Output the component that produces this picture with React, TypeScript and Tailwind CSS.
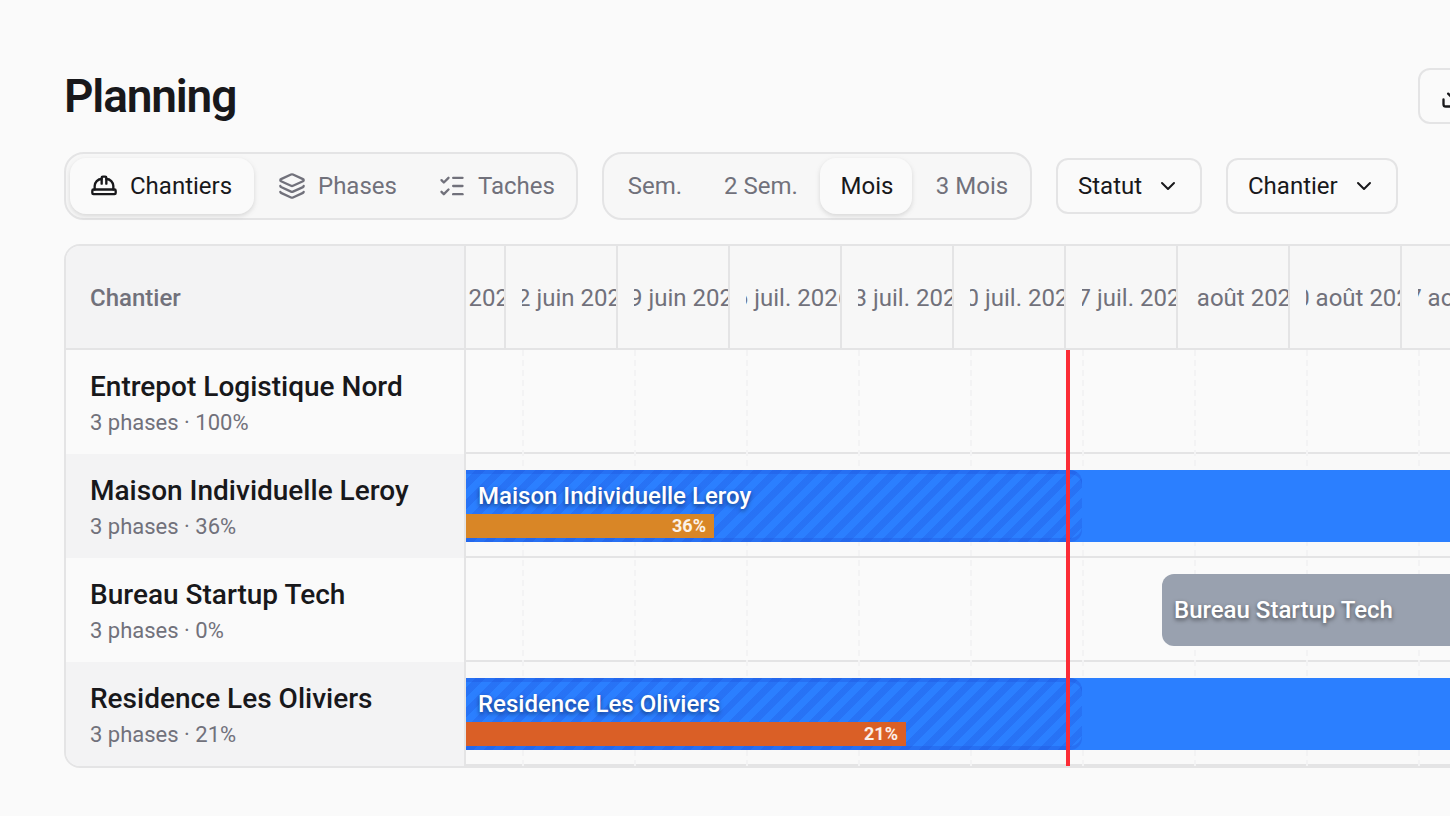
import { useState } from "react";
import { ChevronDown, Download, HardHat, Layers, ListChecks } from "lucide-react";

const VIEWS = [
  { label: "Chantiers", icon: HardHat, width: "w-[184px]" },
  { label: "Phases", icon: Layers, width: "w-[156px]" },
  { label: "Taches", icon: ListChecks, width: "w-[154px]" },
];

const RANGES = [
  { label: "Sem.", width: "w-[92px]" },
  { label: "2 Sem.", width: "w-[112px]" },
  { label: "Mois", width: "w-[92px]" },
  { label: "3 Mois", width: "w-[110px]" },
];

const FILTERS = [
  { label: "Statut", width: "w-[146px]" },
  { label: "Chantier", width: "w-[172px]" },
];

const WEEKS = [
  "15 juin 2026",
  "22 juin 2026",
  "29 juin 2026",
  "6 juil. 2026",
  "13 juil. 2026",
  "20 juil. 2026",
  "27 juil. 2026",
  "3 août 2026",
  "10 août 2026",
  "17 août 2026",
];

type Site = {
  name: string;
  progress: number;
  bar?: { start: number; color: string; elapsed?: number; done?: number; doneColor?: string };
};

const SITES: Site[] = [
  { name: "Entrepot Logistique Nord", progress: 100 },
  {
    name: "Maison Individuelle Leroy",
    progress: 36,
    bar: { start: 0, color: "bg-[#2b7fff]", elapsed: 616, done: 248, doneColor: "bg-[#d98626]" },
  },
  { name: "Bureau Startup Tech", progress: 0, bar: { start: 696, color: "bg-[#99a1af] rounded-l-xl" } },
  {
    name: "Residence Les Oliviers",
    progress: 21,
    bar: { start: 0, color: "bg-[#2b7fff]", elapsed: 616, done: 440, doneColor: "bg-[#da5f26]" },
  },
];

function tabClass(active: boolean) {
  return active
    ? "bg-[#fafafa] text-[#18181b] shadow-[0_2px_6px_rgba(0,0,0,0.08),0_2px_4px_rgba(0,0,0,0.06)]"
    : "text-[#71717b]";
}

function Timeline({ site, striped }: { site: Site; striped: boolean }) {
  const { bar } = site;
  return (
    <div className={`flex h-[104px] border-b-2 border-[#e4e4e5] py-4 ${striped ? "bg-[#f9f9f9]" : ""}`}>
      {bar && (
        <div
          className={`relative z-10 flex h-[72px] flex-1 flex-col overflow-hidden ${bar.color}`}
          style={{ marginLeft: bar.start }}
        >
          {bar.elapsed && (
            <div
              className="absolute inset-y-0 left-0 rounded-r-xl bg-[repeating-linear-gradient(135deg,transparent_0_7px,rgba(29,78,216,0.25)_7px_14px)] shadow-[inset_0_4px_0_rgba(29,78,216,0.3),inset_0_-4px_0_rgba(29,78,216,0.3)]"
              style={{ width: bar.elapsed }}
            />
          )}
          <span
            className={`relative px-3 text-2xl font-medium whitespace-nowrap text-white [text-shadow:0_2px_4px_rgba(0,0,0,0.5)] ${bar.done ? "pt-2.5 pb-0.5 leading-8" : "leading-[72px]"}`}
          >
            {site.name}
          </span>
          {bar.done && (
            <div
              className={`relative h-6 pr-2 text-right text-lg leading-6 font-bold text-white/90 ${bar.doneColor}`}
              style={{ width: bar.done }}
            >
              {site.progress}%
            </div>
          )}
        </div>
      )}
    </div>
  );
}

export default function App() {
  const [view, setView] = useState("Chantiers");
  const [range, setRange] = useState("Mois");

  return (
    <main className="min-h-screen overflow-hidden bg-[#fafafa] p-16 font-[Roboto,sans-serif] text-[#18181b]">
      <div className="flex min-w-[1426px] flex-col gap-6">
        <header className="flex h-16 items-center justify-between">
          <h1 className="text-[46px] leading-[64px] font-semibold tracking-tight">Planning</h1>
          <button
            type="button"
            aria-label="Exporter"
            className="flex h-14 w-[72px] items-center rounded-xl border-2 border-[#e4e4e5] px-5"
          >
            <Download className="size-7" />
          </button>
        </header>

        <div className="flex items-center gap-6 text-2xl">
          <div className="flex gap-1 rounded-[20px] border-2 border-[#e4e4e5] bg-[#f7f7f7] p-1">
            {VIEWS.map(({ label, icon: Icon, width }) => (
              <button
                key={label}
                type="button"
                aria-pressed={view === label}
                onClick={() => setView(label)}
                className={`flex h-14 items-center gap-3 rounded-2xl pl-5 ${width} ${tabClass(view === label)}`}
              >
                <Icon className="size-7 shrink-0" />
                {label}
              </button>
            ))}
          </div>

          <div className="flex gap-1 rounded-[20px] border-2 border-[#e4e4e5] bg-[#f7f7f7] p-1">
            {RANGES.map(({ label, width }) => (
              <button
                key={label}
                type="button"
                aria-pressed={range === label}
                onClick={() => setRange(label)}
                className={`h-14 rounded-2xl pl-0.5 whitespace-nowrap ${width} ${tabClass(range === label)}`}
              >
                {label}
              </button>
            ))}
          </div>

          {FILTERS.map(({ label, width }) => (
            <button
              key={label}
              type="button"
              aria-haspopup="listbox"
              className={`flex h-14 items-center justify-between rounded-xl border-2 border-[#e4e4e5] px-5 ${width}`}
            >
              {label}
              <ChevronDown className="size-6 shrink-0" />
            </button>
          ))}
        </div>

        <section className="flex overflow-hidden rounded-2xl border-2 border-[#e4e4e5]">
          <div className="w-[400px] shrink-0 border-r-2 border-[#e4e4e5]">
            <div className="flex h-[104px] items-center border-b-2 border-[#e4e4e5] bg-[#f3f3f4] px-6 pt-0.5 text-2xl font-medium text-[#71717b]">
              Chantier
            </div>
            {SITES.map((site, i) => (
              <div
                key={site.name}
                className={`flex h-[104px] flex-col justify-center px-6 pt-0.5 ${i % 2 ? "bg-[#f3f3f4]" : ""}`}
              >
                <div className="text-[28px] leading-10 font-medium whitespace-nowrap">{site.name}</div>
                <div className="text-[22px] leading-8 text-[#71717b]">3 phases · {site.progress}%</div>
              </div>
            ))}
          </div>

          <div className="min-w-0 flex-1 overflow-hidden">
            <div className="h-[104px] border-b-2 border-[#e4e4e5] bg-[#f7f7f7]">
              <div className="-ml-[72px] flex h-full">
                {WEEKS.map((week) => (
                  <div
                    key={week}
                    className="flex w-28 shrink-0 items-center border-r-2 border-[#e4e4e5] pt-0.5 pl-4 text-2xl text-[#71717b]"
                  >
                    <div className="flex w-full justify-center overflow-hidden whitespace-nowrap">
                      <span>{week}</span>
                    </div>
                  </div>
                ))}
              </div>
            </div>

            <div className="relative">
              {SITES.map((site, i) => (
                <Timeline key={site.name} site={site} striped={i % 2 === 1} />
              ))}
              <div className="pointer-events-none absolute inset-0 flex gap-[110px] pl-14">
                {WEEKS.slice(1).map((week) => (
                  <div
                    key={week}
                    className="w-0.5 shrink-0 bg-[repeating-linear-gradient(180deg,#f3f3f4_0_6px,transparent_6px_10px)]"
                  />
                ))}
              </div>
              <div className="absolute inset-y-0 left-[600px] z-20 w-1 bg-[#fb2c36]" />
            </div>
          </div>
        </section>
      </div>
    </main>
  );
}
